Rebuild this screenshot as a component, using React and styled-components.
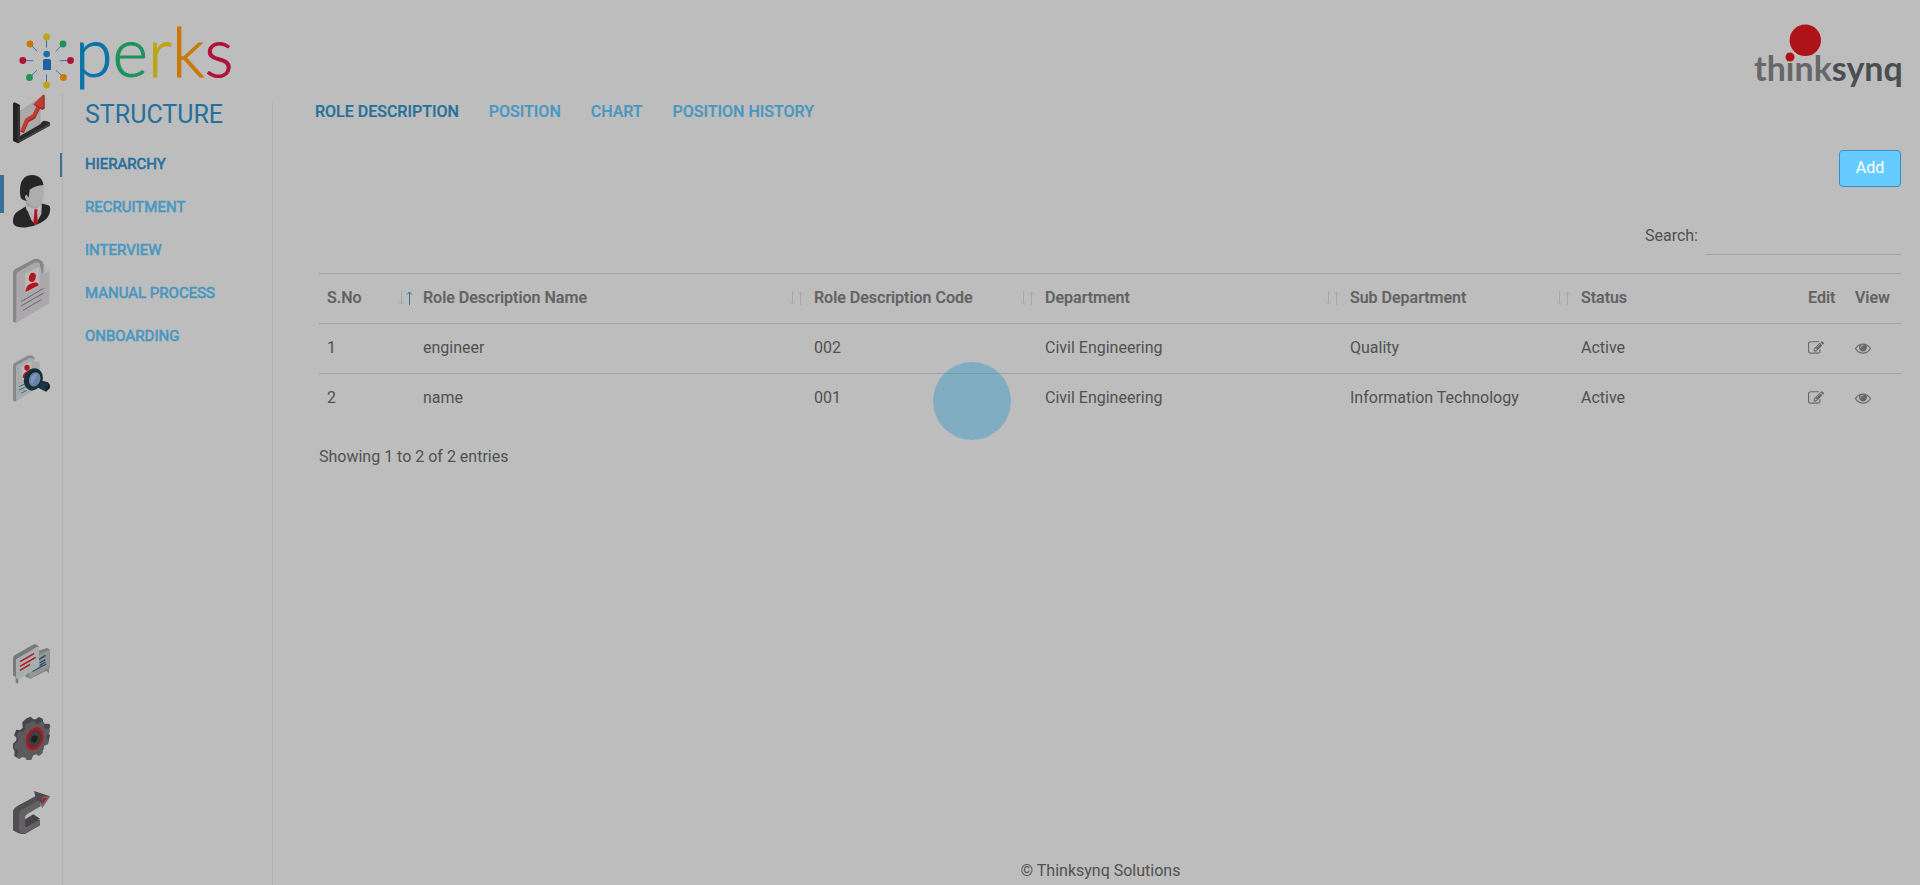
import React from "react";
import styled, { createGlobalStyle } from "styled-components";

const colors = {
  page: "#bdbdbd",
  text: "#505152",
  heading: "#626262",
  line: "#a3a3a3",
  divider: "#b0b0b0",
  primary: "#25719c",
  link: "#4797c1",
  marker: "#3b7198",
};

const GlobalStyle = createGlobalStyle`
  *, *::before, *::after { box-sizing: border-box; }
  body {
    margin: 0;
    background: ${colors.page};
    color: ${colors.text};
    font: 400 16px/24px Roboto, "Liberation Sans", sans-serif;
  }
`;

const Page = styled.div`
  display: flex;
  flex-direction: column;
  min-height: 100vh;
`;

const Header = styled.header`
  display: flex;
  justify-content: space-between;
  padding: 22px 18px 0 16px;
`;

const Logo = styled.svg`
  display: block;
  flex: none;
  overflow: visible;
`;

const Body = styled.div`
  display: flex;
  flex: 1;
`;

const Rail = styled.nav`
  display: flex;
  flex-direction: column;
  justify-content: space-between;
  gap: 30px;
  flex: none;
  width: 63px;
  padding-bottom: 50px;
  border-right: 1px solid ${colors.divider};
`;

const RailGroup = styled.div`
  display: flex;
  flex-direction: column;
  gap: 30px;
`;

const RailLink = styled.a`
  position: relative;
  display: block;
  padding-left: 12px;

  svg {
    display: block;
  }

  &[aria-current]::before {
    content: "";
    position: absolute;
    left: 0;
    top: 1px;
    width: 4px;
    height: 38px;
    background: ${colors.marker};
  }
`;

const Sidebar = styled.aside`
  flex: none;
  width: 210px;
  margin-top: 9px;
  border-right: 1px solid ${colors.divider};
`;

const SidebarTitle = styled.h1`
  margin: 0 0 25px;
  padding-left: 22px;
  color: ${colors.primary};
  font-size: 25px;
  font-weight: 400;
  line-height: 24px;
`;

const SidebarNav = styled.nav`
  display: flex;
  flex-direction: column;
  gap: 19px;
`;

const NavLink = styled.a`
  color: ${(p) => (p["aria-current"] ? colors.primary : colors.link)};
  text-decoration: none;
  text-transform: uppercase;
`;

const SidebarLink = styled(NavLink)`
  position: relative;
  padding-left: 22px;
  font-size: 15px;
  -webkit-text-stroke: 0.6px currentColor;

  &[aria-current]::before {
    content: "";
    position: absolute;
    left: -3px;
    top: 1px;
    width: 2px;
    height: 24px;
    background: ${colors.marker};
  }
`;

const TabLink = styled(NavLink)`
  font-weight: 500;
  -webkit-text-stroke: 0.2px currentColor;
`;

const Main = styled.main`
  display: flex;
  flex-direction: column;
  flex: 1;
  min-width: 0;
  padding: 6px 19px 2px 27px;
`;

const Tabs = styled.nav`
  display: flex;
  gap: 30px;
  padding-left: 15px;
`;

const Content = styled.section`
  display: flex;
  flex-direction: column;
  padding: 26px 0 0 19px;
`;

const AddButton = styled.button`
  align-self: flex-end;
  width: 62px;
  height: 37px;
  padding: 0 0 2px;
  border: 1px solid #2f90cc;
  border-radius: 4px;
  background: #66ccff;
  color: #fff;
  font: inherit;
`;

const SearchRow = styled.div`
  display: flex;
  align-items: center;
  justify-content: flex-end;
  gap: 8px;
  margin: 30px 0 18px;
`;

const SearchInput = styled.input`
  width: 195px;
  height: 38px;
  padding: 0;
  border: 0;
  border-bottom: 1px solid ${colors.line};
  outline: 0;
  background: transparent;
  color: inherit;
  font: inherit;
`;

const Table = styled.table`
  width: 100%;
  border-spacing: 0;
  table-layout: fixed;
`;

const HeadCell = styled.th`
  height: 50px;
  padding: 0 0 2px 8px;
  border-top: 1px solid ${colors.line};
  color: ${colors.heading};
  font-weight: 500;
  text-align: left;
  white-space: nowrap;
  -webkit-text-stroke: 0.2px currentColor;
`;

const Cell = styled.td`
  height: 50px;
  padding: 0 0 2px 8px;
  border-top: 1px solid ${colors.line};
`;

const SortButton = styled.button`
  display: flex;
  align-items: center;
  justify-content: space-between;
  width: 100%;
  padding: 0 1px 0 0;
  border: 0;
  background: none;
  color: inherit;
  font: inherit;
  -webkit-text-stroke: inherit;
`;

const IconButton = styled.button`
  display: block;
  padding: 0;
  border: 0;
  background: none;
  color: #69696a;

  svg {
    display: block;
  }
`;

const Summary = styled.p`
  margin: 22px 0 0;
`;

const Footer = styled.footer`
  margin-top: auto;
  text-align: center;
`;

const Pulse = styled.div`
  position: fixed;
  left: calc(50% - 27px);
  top: calc(50% - 81px);
  width: 78px;
  height: 78px;
  border-radius: 50%;
  background: rgba(55, 153, 200, 0.45);
  pointer-events: none;
`;

const spokes = [
  [46.5, 37, "#bda616"],
  [63, 44, "#1d935c"],
  [70.5, 60.5, "#b0113b"],
  [63.5, 77.5, "#c87806"],
  [46.5, 85, "#bda616"],
  [29.5, 77.5, "#1d935c"],
  [22.8, 60.5, "#b0113b"],
  [30, 44, "#c87806"],
];

function PerksLogo() {
  const cx = 46.5;
  const cy = 61;
  return (
    <Logo width="218" height="72" viewBox="16 22 218 72" role="img" aria-label="perks">
      {spokes.map(([x, y, fill]) => (
        <g key={`${x}-${y}`}>
          <line
            x1={x}
            y1={y}
            x2={cx + (x - cx) * 0.56}
            y2={cy + (y - cy) * 0.56}
            stroke="#3973a8"
            strokeWidth="1"
          />
          <circle cx={x} cy={y} r="3.4" fill={fill} />
        </g>
      ))}
      <circle cx="46.7" cy="54" r="3.3" fill="#1d6cac" />
      <path d="M43 61q0-2 2-2h4q2 0 2 2v9h-8z" fill="#1d62a2" />
      <text x="75" y="77" fontFamily="Lato, Roboto, sans-serif" fontSize="68" fontWeight="300">
        <tspan fill="#0a74a8" stroke="#0a74a8">p</tspan>
        <tspan fill="#1d935c" stroke="#1d935c">e</tspan>
        <tspan fill="#bda616" stroke="#bda616">r</tspan>
        <tspan fill="#c87806" stroke="#c87806">k</tspan>
        <tspan fill="#b0113b" stroke="#b0113b">s</tspan>
      </text>
    </Logo>
  );
}

function ThinksynqLogo() {
  return (
    <Logo width="150" height="72" viewBox="1752 22 150 72" role="img" aria-label="thinksynq">
      <text x="1754" y="81" fontFamily="Lato, Roboto, sans-serif" fontSize="34" fontWeight="700">
        <tspan fill="#66676a">think</tspan>
        <tspan fill="#4a4e51">synq</tspan>
      </text>
      <circle cx="1805.3" cy="40.3" r="15.7" fill="#ae131a" />
      <circle cx="1790" cy="57" r="4.5" fill="#ae131a" />
    </Logo>
  );
}

function ChartIcon() {
  return (
    <svg width="39" height="50" viewBox="36 42 117 150" aria-hidden="true">
      <path d="M60 94l60-40v84l-60 36z" fill="#aaa8a9" stroke="#999" strokeWidth="2" />
      <path d="M56 170l66-38q2-9 12-10 12 1 16 6v8l-96 54-6-8z" fill="#2b2a2b" />
      <path d="M56 182l94-52v7l-96 53z" fill="#424041" />
      <path d="M39 70l5-3 16 8v100l-6 15-15-7z" fill="#252425" />
      <path d="M53 80l7-4v100l-7 12z" fill="#363536" />
      <path d="M66 157l15-35 20-11 14-28" fill="none" stroke="#972b24" strokeWidth="12" />
      <path d="M66 153l15-34 20-12 14-26" fill="none" stroke="#c33a30" strokeWidth="10" />
      <path d="M130 44l4 2v40l-7 4-27-16z" fill="#972b24" />
      <path d="M130 44v42l-29-14z" fill="#c33a30" />
    </svg>
  );
}

function PersonIcon() {
  return (
    <svg width="39" height="54" viewBox="36 282 117 162" aria-hidden="true">
      <path d="M39 424c0-18 8-27 20-33l20-13 44-8 22 6c7 2 6 12 4 22-3 12-10 21-22 27-20 13-54 22-75 15-10-3-13-8-13-16z" fill="#272627" />
      <path d="M77 378l49-12-2 36-18 33-12-15z" fill="#b7b4b7" />
      <path d="M78 345h48v28l-20 15-28-12z" fill="#a2a0a3" />
      <path d="M79 328q20-18 51-16c3 18 2 45-7 59q-8 12-21 9c-11-3-18-11-23-22z" fill="#adacaf" />
      <path d="M62 352c-6-38 3-66 34-67 20 0 33 13 34 30-14 1-27 4-41 14l-3 24-6-9c-7 2-5 12 1 19-10-1-17-4-19-11z" fill="#272627" />
      <path d="M77 379l27 11 20-13-2 12-15 14-27-12z" fill="#bcbabd" />
      <path d="M103 389l6-2 4 3-2 8 3 31-9 6-5-6 3-30z" fill="#b5141c" />
    </svg>
  );
}

function ResumeIcon() {
  return (
    <svg width="39" height="66" viewBox="36 54 117 198" aria-hidden="true">
      <path d="M39 97q0-7 8-11l51-27q18-7 28 5l6 12-80 60-2 112-11-3z" fill="#878688" />
      <path d="M49 103q0-5 6-8l48-27q16-5 18 8l2 25 25-7v96l-99 58z" fill="#aaa8aa" />
      <path d="M121 76l4 25 6-4V76q-2-10-10-13z" fill="#878688" />
      <path d="M131 76l18 18-18 5z" fill="#b6b5b7" />
      <path d="M75 101l43-21v57l-42 22z" fill="#bab9bb" />
      <ellipse cx="97" cy="112" rx="10" ry="14" fill="#b5141c" transform="rotate(15 97 112)" />
      <path d="M77 156c1-15 6-22 19-26 14-6 20 0 20 6z" fill="#b5141c" />
      <path d="M63 185l68-40M63 198l68-39M69 211l55-32" stroke="#5a5a5c" strokeWidth="2.5" />
    </svg>
  );
}

function SearchResumeIcon() {
  return (
    <svg width="39" height="48" viewBox="36 339 117 144" aria-hidden="true">
      <path d="M39 374q0-6 6-9l36-20q16-7 24 8l-55 38-1 91-10-3z" fill="#858a8d" />
      <path d="M48 378q0-4 5-7l33-19q14-4 16 9l17 2v73l-71 45z" fill="#a6acad" />
      <path d="M64 377l30-17v46l-28 17z" fill="#b9babc" />
      <ellipse cx="81" cy="380" rx="8" ry="9" fill="#b5141c" />
      <path d="M68 411c0-11 5-18 17-21l8 1v16z" fill="#b5141c" />
      <path d="M57 437l19-9M57 447l19-8M64 456l16-8" stroke="#3b6c70" strokeWidth="3" />
      <path d="M120 418l24 6 6 8v9l-12 11-26-14z" fill="#152631" />
      <path d="M122 424l24 4-9 9v14l-23-11z" fill="#1e3643" />
      <ellipse cx="100" cy="415" rx="28" ry="34" fill="#1b303d" transform="rotate(20 100 415)" />
      <ellipse cx="103" cy="413" rx="20" ry="26" fill="#152631" transform="rotate(20 103 413)" />
      <ellipse cx="104" cy="415" rx="17" ry="22" fill="#6683a8" transform="rotate(20 104 415)" />
      <path d="M92 420q0-19 22-24l-19 36z" fill="#8196b5" />
    </svg>
  );
}

function ChatIcon() {
  return (
    <svg width="39" height="42" viewBox="36 39 117 126" aria-hidden="true">
      <path d="M76 76l66-23 8 6v53l-3 4v14l-8-8-47 24-16-6z" fill="#7e8081" />
      <path d="M88 86l61-27v52l-53 32-8-2z" fill="#949697" />
      <path d="M117 88l20-12M119 99l17-10M119 107l17-11M97 124l42-22" stroke="#2b4e68" strokeWidth="4" />
      <path d="M39 83q0-5 6-8l57-32q8-1 10 3l6 5-61 40-3 70-7-3v-17l-8-5z" fill="#777a7b" />
      <path d="M48 88l62-37q7-4 7 3v53q0 4-4 7l-53 31-6 15v-13l-6-2z" fill="#a8adae" />
      <path d="M60 95l42-24M60 109l47-27M60 121l30-18" stroke="#b5141c" strokeWidth="4" />
    </svg>
  );
}

function GearIcon() {
  return (
    <svg width="39" height="45" viewBox="36 255 117 135" aria-hidden="true">
      <path
        d="M80 265l12-5 8 8h8l8-7 12 5 2 13 5 3 13-1 3 8-6 14v7l5 6-4 16-11 6-4 9v11l-12 11-10-3-9 5-4 12-14 3-10-8-8 1-10 6-11-7 1-14-5-9v-14l9-9 2-8-8-8 7-17 12 1 7-7-1-16z"
        fill="#474547"
      />
      <path
        d="M91 277l11-5 6 9 8 1 9-9 8 5v14l5 5 11-1v11l-8 10v8l7 4-4 14-11 4-5 9v13l-11 9-10-5-9 5-4 12-13 3-5-10-8-2-11 6-8-6 5-14-3-9-9-2 1-13 10-9 2-9-5-7 7-13 12 1 7-8-1-13z"
        fill="#5c5a5c"
      />
      <ellipse cx="104" cy="326" rx="25" ry="35" fill="#b5141c" transform="rotate(20 104 326)" />
      <ellipse cx="104" cy="326" rx="19" ry="27" fill="#3f3d3f" transform="rotate(20 104 326)" />
      <path d="M96 320l7-5 4 3 6-1v8l-3 8-7 6-4-4-6 1 1-9z" fill="#222122" />
    </svg>
  );
}

function ExitIcon() {
  return (
    <svg width="39" height="45" viewBox="36 480 117 135" aria-hidden="true">
      <path d="M39 548q0-12 14-20l51-26 20 12-44 24q-6 4-6 10v28l26-16 20 12v14l-44 25q-14 2-19-1l-18-9z" fill="#444244" />
      <path d="M39 548q0-12 14-20l53-29 18 12-54 30q-12 8-12 16l-1 53-18-9z" fill="#504e50" />
      <path d="M57 556q0-12 12-19l53-29v21l-40 23q-7 4-7 12v24q0 5 6 2l39-22v16l-43 25q-20 6-20-12z" fill="#636163" />
      <path d="M75 568l25-15 20 13-38 22q-7 2-7-5z" fill="#464446" />
      <path d="M102 483l48 16-24 35-4-18-14-10z" fill="#4c4a4c" />
      <path d="M126 501l24-2-24 35z" fill="#6f6b6d" />
      <path d="M128 504h13l-14 19z" fill="#bd161f" />
    </svg>
  );
}

function SortArrows({ ascending }) {
  return (
    <svg width="16" height="16" viewBox="0 0 16 16" fill="none" strokeWidth="1" aria-hidden="true">
      <path d="M3.5 1v13M1 11.5l2.5 2.5 2.5-2.5" stroke="#a6a6a6" />
      <path d="M11.5 15V2M9 4.5l2.5-2.5 2.5 2.5" stroke={ascending ? "#2577a5" : "#a6a6a6"} />
    </svg>
  );
}

function EditIcon() {
  return (
    <svg width="16" height="16" viewBox="0 0 1792 1792" fill="currentColor" aria-hidden="true">
      <path d="M888 1184l116-116-152-152-116 116v56h96v96h56zm440-720q-16-16-33 1l-350 350q-17 17-1 33t33-1l350-350q17-17 1-33zm80 594v190q0 119-84.5 203.5t-203.5 84.5h-832q-119 0-203.5-84.5t-84.5-203.5v-832q0-119 84.5-203.5t203.5-84.5h832q63 0 117 25 15 7 18 23 3 17-9 29l-49 49q-14 14-32 8-23-6-45-6h-832q-66 0-113 47t-47 113v832q0 66 47 113t113 47h832q66 0 113-47t47-113v-126q0-13 9-22l64-64q15-15 35-7t20 29zm-96-738l288 288-672 672h-288v-288zm444 132l-92 92-288-288 92-92q28-28 68-28t68 28l152 152q28 28 28 68t-28 68z" />
    </svg>
  );
}

function EyeIcon() {
  return (
    <svg width="16" height="16" viewBox="0 0 1792 1792" fill="currentColor" aria-hidden="true">
      <path d="M1664 960q-152-236-381-353 61 104 61 225 0 185-131.5 316.5t-316.5 131.5-316.5-131.5-131.5-316.5q0-121 61-225-229 117-381 353 133 205 333.5 326.5t434.5 121.5 434.5-121.5 333.5-326.5zm-720-384q0-20-14-34t-34-14q-125 0-214.5 89.5t-89.5 214.5q0 20 14 34t34 14 34-14 14-34q0-86 61-147t147-61q20 0 34-14t14-34zm848 384q0 34-20 69-140 230-376.5 368.5t-499.5 138.5-499.5-139-376.5-368q-20-35-20-69t20-69q140-229 376.5-368t499.5-139 499.5 139 376.5 368q20 35 20 69z" />
    </svg>
  );
}

const railTop = [
  { label: "Dashboard", Icon: ChartIcon },
  { label: "Structure", Icon: PersonIcon, active: true },
  { label: "Profile", Icon: ResumeIcon },
  { label: "Audit", Icon: SearchResumeIcon },
];

const railBottom = [
  { label: "Messages", Icon: ChatIcon },
  { label: "Settings", Icon: GearIcon },
  { label: "Log out", Icon: ExitIcon },
];

const sections = ["Hierarchy", "Recruitment", "Interview", "Manual Process", "Onboarding"];
const tabs = ["Role Description", "Position", "Chart", "Position History"];

const columns = [
  { title: "S.No", width: 96, sort: true, ascending: true },
  { title: "Role Description Name", width: 391, sort: true },
  { title: "Role Description Code", width: 231, sort: true },
  { title: "Department", width: 305, sort: true },
  { title: "Sub Department", width: 231, sort: true },
  { title: "Status", width: 227 },
  { title: "Edit", width: 47 },
  { title: "View", width: 54 },
];

const rows = [
  ["1", "engineer", "002", "Civil Engineering", "Quality", "Active"],
  ["2", "name", "001", "Civil Engineering", "Information Technology", "Active"],
];

function RailItems({ items }) {
  return (
    <RailGroup>
      {items.map(({ label, Icon, active }) => (
        <RailLink key={label} href="#" aria-label={label} aria-current={active ? "page" : undefined}>
          <Icon />
        </RailLink>
      ))}
    </RailGroup>
  );
}

export default function App() {
  return (
    <>
      <GlobalStyle />
      <Page>
        <Header>
          <PerksLogo />
          <ThinksynqLogo />
        </Header>
        <Body>
          <Rail aria-label="Modules">
            <RailItems items={railTop} />
            <RailItems items={railBottom} />
          </Rail>
          <Sidebar>
            <SidebarTitle>STRUCTURE</SidebarTitle>
            <SidebarNav aria-label="Structure">
              {sections.map((name, i) => (
                <SidebarLink key={name} href="#" aria-current={i === 0 ? "page" : undefined}>
                  {name}
                </SidebarLink>
              ))}
            </SidebarNav>
          </Sidebar>
          <Main>
            <Tabs aria-label="Hierarchy">
              {tabs.map((name, i) => (
                <TabLink key={name} href="#" aria-current={i === 0 ? "page" : undefined}>
                  {name}
                </TabLink>
              ))}
            </Tabs>
            <Content>
              <AddButton type="button">Add</AddButton>
              <SearchRow>
                <label htmlFor="role-search">Search:</label>
                <SearchInput id="role-search" type="search" />
              </SearchRow>
              <Table>
                <colgroup>
                  {columns.map(({ title, width }) => (
                    <col key={title} width={width} />
                  ))}
                </colgroup>
                <thead>
                  <tr>
                    {columns.map(({ title, sort, ascending }) => (
                      <HeadCell key={title} scope="col" aria-sort={ascending ? "ascending" : undefined}>
                        {sort ? (
                          <SortButton type="button">
                            {title}
                            <SortArrows ascending={ascending} />
                          </SortButton>
                        ) : (
                          title
                        )}
                      </HeadCell>
                    ))}
                  </tr>
                </thead>
                <tbody>
                  {rows.map((row) => (
                    <tr key={row[0]}>
                      {row.map((value, i) => (
                        <Cell key={columns[i].title}>{value}</Cell>
                      ))}
                      <Cell>
                        <IconButton type="button" aria-label={`Edit ${row[1]}`}>
                          <EditIcon />
                        </IconButton>
                      </Cell>
                      <Cell>
                        <IconButton type="button" aria-label={`View ${row[1]}`}>
                          <EyeIcon />
                        </IconButton>
                      </Cell>
                    </tr>
                  ))}
                </tbody>
              </Table>
              <Summary>Showing 1 to 2 of 2 entries</Summary>
            </Content>
            <Footer>© Thinksynq Solutions</Footer>
          </Main>
        </Body>
      </Page>
      <Pulse aria-hidden="true" />
    </>
  );
}
